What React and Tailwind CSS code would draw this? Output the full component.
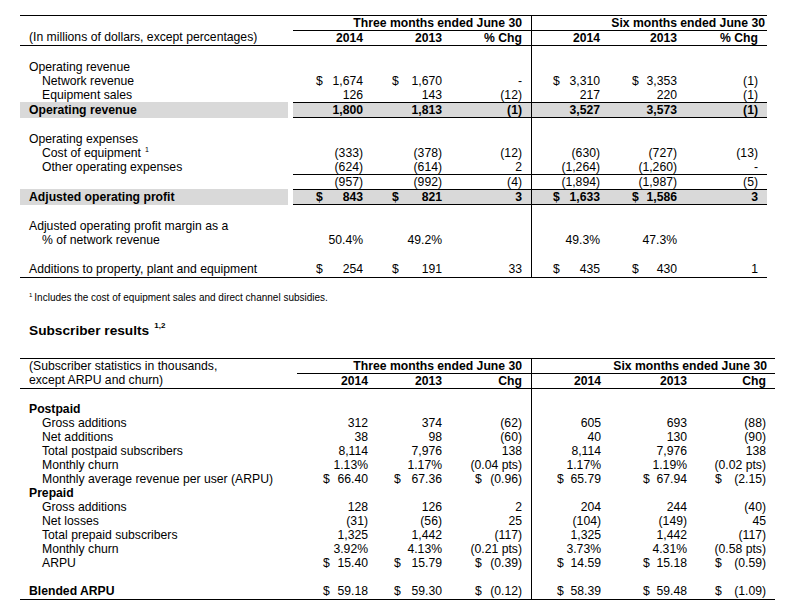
import React from "react";

// column geometry for the two statements
const T1 = {
  cols: "grid w-[747px] grid-cols-[273px_80px_79px_79px_79px_78px_79px]",
  pl: ["pl-[23px]", "pl-[19px]", "pl-[10px]", "pl-[21px]", "pl-[22px]", "pl-[10px]"],
  pr: ["pr-[10px]", "pr-[10px]", "pr-[9px]", "pr-[10px]", "pr-[11px]", "pr-[9px]"],
};

const T2 = {
  cols: "grid w-[755px] grid-cols-[277px_81px_74px_79px_80px_86px_78px]",
  pl: ["pl-[26px]", "pl-[16px]", "pl-[23px]", "pl-[25px]", "pl-[32px]", "pl-[18px]"],
  pr: ["pr-[10px]", "pr-[10px]", "pr-[9px]", "pr-[10px]", "pr-[10px]", "pr-[9px]"],
};

function Num({ t, i, v, cls = "" }) {
  const hasD = typeof v === "string" && v.startsWith("$ ");
  const txt = hasD ? v.slice(2) : v;
  return (
    <div
      className={`flex items-center whitespace-nowrap ${hasD ? "justify-between" : "justify-end"} ${t.pl[i]} ${t.pr[i]} ${i === 3 ? "border-l border-black" : ""} ${cls}`}
    >
      {hasD && <span>$</span>}
      <span>{txt}</span>
    </div>
  );
}

function Row({ t, label, sup, indent, bold, gray, h = "h-[14px]", numCls = "", rowCls = "", vals = [] }) {
  return (
    <div className={`${t.cols} ${h} ${rowCls}`}>
      <div className={gray ? "pr-[5px]" : ""}>
        <div
          className={`flex h-full items-center whitespace-nowrap ${indent ? "pl-[22px]" : "pl-[9px]"} ${bold ? "font-bold" : ""} ${gray ? "bg-[#d9d9d9]" : ""}`}
        >
          {label}
          {sup && <span className="relative -top-[4px] ml-[4px] text-[7px]">{sup}</span>}
        </div>
      </div>
      {[0, 1, 2, 3, 4, 5].map((i) => (
        <Num
          key={i}
          t={t}
          i={i}
          v={vals[i] || ""}
          cls={`${numCls} ${bold ? "font-bold" : ""} ${gray ? "bg-[#d9d9d9]" : ""}`}
        />
      ))}
    </div>
  );
}

const SUBS = [
  { label: "Postpaid", bold: true },
  { label: "Gross additions", indent: true, vals: ["312", "374", "(62)", "605", "693", "(88)"] },
  { label: "Net additions", indent: true, vals: ["38", "98", "(60)", "40", "130", "(90)"] },
  { label: "Total postpaid subscribers", indent: true, vals: ["8,114", "7,976", "138", "8,114", "7,976", "138"] },
  { label: "Monthly churn", indent: true, vals: ["1.13%", "1.17%", "(0.04 pts)", "1.17%", "1.19%", "(0.02 pts)"] },
  {
    label: "Monthly average revenue per user (ARPU)",
    indent: true,
    vals: ["$ 66.40", "$ 67.36", "$ (0.96)", "$ 65.79", "$ 67.94", "$ (2.15)"],
  },
  { label: "Prepaid", bold: true },
  { label: "Gross additions", indent: true, vals: ["128", "126", "2", "204", "244", "(40)"] },
  { label: "Net losses", indent: true, vals: ["(31)", "(56)", "25", "(104)", "(149)", "45"] },
  { label: "Total prepaid subscribers", indent: true, vals: ["1,325", "1,442", "(117)", "1,325", "1,442", "(117)"] },
  { label: "Monthly churn", indent: true, vals: ["3.92%", "4.13%", "(0.21 pts)", "3.73%", "4.31%", "(0.58 pts)"] },
  { label: "ARPU", indent: true, vals: ["$ 15.40", "$ 15.79", "$ (0.39)", "$ 14.59", "$ 15.18", "$ (0.59)"] },
];

export default function App() {
  return (
    <div className="h-[615px] w-[797px] overflow-hidden bg-white pl-[20px] pt-[15px] font-['Liberation_Sans',Arial,sans-serif] text-[12.2px] leading-none text-black">
      {/* OPERATING RESULTS */}
      <div>
        <div className={`${T1.cols} h-[15px] border-t border-black font-bold`}>
          <div />
          <div className="col-span-3 flex items-center justify-end pr-[9px]">Three months ended June 30</div>
          <div className="col-span-3 flex items-center justify-end border-l border-black pr-[2px]">
            Six months ended June 30
          </div>
        </div>
        <div className={`${T1.cols} h-[16px] border-b border-black`}>
          <div className="flex items-center pl-[9px] whitespace-nowrap">(In millions of dollars, except percentages)</div>
          {["2014", "2013", "% Chg", "2014", "2013", "% Chg"].map((v, i) => (
            <Num key={i} t={T1} i={i} v={v} cls="border-t border-black font-bold" />
          ))}
        </div>
        <Row t={T1} />
        <Row t={T1} label="Operating revenue" />
        <Row
          t={T1}
          indent
          label="Network revenue"
          vals={["$ 1,674", "$ 1,670", "-", "$ 3,310", "$ 3,353", "(1)"]}
        />
        <Row t={T1} indent label="Equipment sales" vals={["126", "143", "(12)", "217", "220", "(1)"]} />
        <Row
          t={T1}
          gray
          bold
          h="h-[16px]"
          numCls="border-t border-b border-black"
          label="Operating revenue"
          vals={["1,800", "1,813", "(1)", "3,527", "3,573", "(1)"]}
        />
        <Row t={T1} />
        <Row t={T1} label="Operating expenses" />
        <Row
          t={T1}
          indent
          label="Cost of equipment"
          sup="1"
          vals={["(333)", "(378)", "(12)", "(630)", "(727)", "(13)"]}
        />
        <Row
          t={T1}
          indent
          label="Other operating expenses"
          vals={["(624)", "(614)", "2", "(1,264)", "(1,260)", "-"]}
        />
        <Row
          t={T1}
          h="h-[15px]"
          numCls="border-t border-black"
          vals={["(957)", "(992)", "(4)", "(1,894)", "(1,987)", "(5)"]}
        />
        <Row
          t={T1}
          gray
          bold
          h="h-[16px]"
          numCls="border-t border-b border-black"
          label="Adjusted operating profit"
          vals={["$ 843", "$ 821", "3", "$ 1,633", "$ 1,586", "3"]}
        />
        <Row t={T1} />
        <Row t={T1} label="Adjusted operating profit margin as a" />
        <Row t={T1} indent label="% of network revenue" vals={["50.4%", "49.2%", "", "49.3%", "47.3%", ""]} />
        <Row t={T1} h="h-[15px]" />
        <Row
          t={T1}
          h="h-[16px]"
          rowCls="border-b border-black"
          label="Additions to property, plant and equipment"
          vals={["$ 254", "$ 191", "33", "$ 435", "$ 430", "1"]}
        />
      </div>

      {/* FOOTNOTE */}
      <div className="mt-[14px] flex h-[12px] items-center pl-[9px] text-[10px]">
        <span className="relative -top-[3px] mr-[2px] text-[6px]">1</span>
        Includes the cost of equipment sales and direct channel subsidies.
      </div>

      <div className="mt-[19px] flex h-[16px] items-center pl-[9px] text-[13.7px] font-bold">
        Subscriber results
        <span className="relative -top-[5px] ml-[5px] text-[8px]">1,2</span>
      </div>

      {/* SUBSCRIBER RESULTS */}
      <div className="mt-[19px]">
        <div className={`${T2.cols} h-[15px] border-t border-black`}>
          <div className="flex items-center pl-[9px] whitespace-nowrap">(Subscriber statistics in thousands,</div>
          <div className="col-span-3 flex items-center justify-end pr-[9px] font-bold">Three months ended June 30</div>
          <div className="col-span-3 flex items-center justify-end border-l border-black pr-[8px] font-bold">
            Six months ended June 30
          </div>
        </div>
        <div className={`${T2.cols} h-[16px] border-b border-black`}>
          <div className="flex items-center pl-[9px] whitespace-nowrap">except ARPU and churn)</div>
          {["2014", "2013", "Chg", "2014", "2013", "Chg"].map((v, i) => (
            <Num key={i} t={T2} i={i} v={v} cls="border-t border-black font-bold" />
          ))}
        </div>
        <Row t={T2} h="h-[13px]" />
        {SUBS.map((r, idx) => (
          <Row key={idx} t={T2} {...r} />
        ))}
        <Row t={T2} />
        <Row
          t={T2}
          h="h-[16px]"
          rowCls="border-b border-black"
          label={<span className="font-bold">Blended ARPU</span>}
          vals={["$ 59.18", "$ 59.30", "$ (0.12)", "$ 58.39", "$ 59.48", "$ (1.09)"]}
        />
      </div>
    </div>
  );
}
